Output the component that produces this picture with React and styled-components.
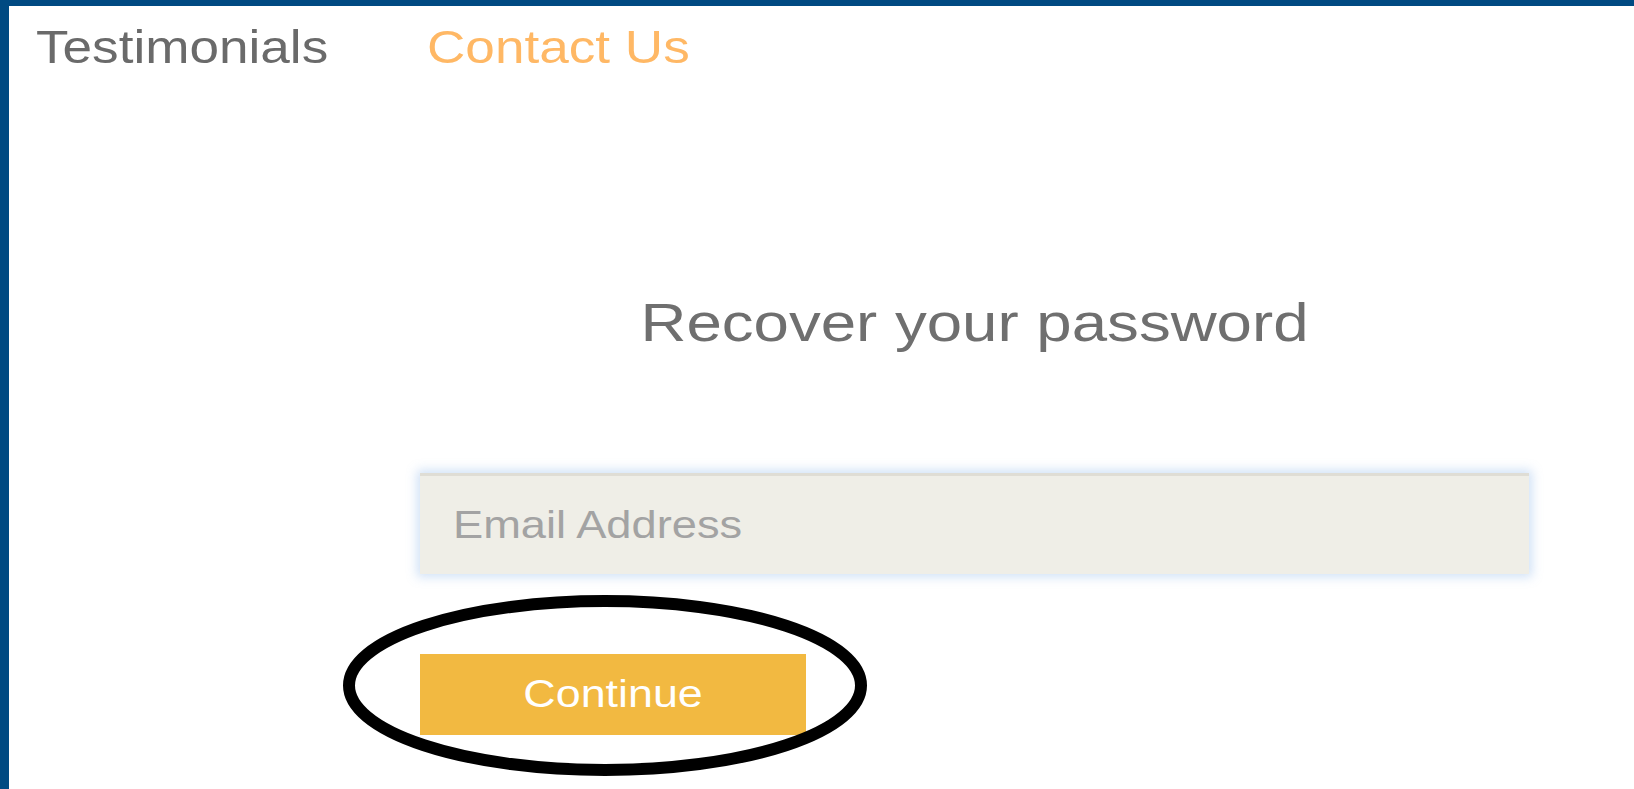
import React from "react";
import styled, { createGlobalStyle } from "styled-components";

const GlobalStyle = createGlobalStyle`
    html, body {
        margin: 0;
        padding: 0;
        background: #ffffff;
    }
    * {
        box-sizing: border-box;
    }
`;

const Page = styled.div`
    min-height: 100vh;
    border-top: 6px solid #004a82;
    border-left: 9px solid #004a82;
    font-family: "Liberation Sans", Arial, sans-serif;
    overflow: hidden;
`;

const Nav = styled.nav`
    display: flex;
    align-items: flex-start;
    gap: 132px;
    height: 80px;
    padding: 17px 0 0 27px;
`;

const NavLink = styled.a`
    display: inline-block;
    font-size: 47px;
    line-height: 1;
    color: ${(props) => (props.$active ? "#ffb865" : "#6a6a6a")};
    text-decoration: none;
    transform: scaleX(1.13);
    transform-origin: left center;
    white-space: nowrap;
`;

const Form = styled.form`
    display: flex;
    flex-direction: column;
    align-items: flex-start;
    width: 1109px;
    margin-left: 411px;
`;

const Title = styled.h1`
    align-self: stretch;
    margin: 210px 0 0;
    font-size: 53px;
    font-weight: normal;
    line-height: 1;
    color: #6f6f6f;
    text-align: center;
    transform: scaleX(1.2);
    transform-origin: center;
`;

const Field = styled.div`
    width: 1109px;
    height: 101px;
    margin-top: 124px;
    display: flex;
    align-items: center;
    padding-left: 33px;
    background: #efeee7;
    border-top: 3px solid #dfddd5;
    box-shadow: 0 0 10px 3px rgba(120, 170, 230, 0.35);
`;

const Placeholder = styled.span`
    display: inline-block;
    font-size: 39px;
    color: #a3a3a3;
    transform: scaleX(1.16);
    transform-origin: left center;
`;

const ButtonWrap = styled.div`
    position: relative;
    margin-top: 80px;
`;

const Button = styled.button`
    display: flex;
    align-items: center;
    justify-content: center;
    width: 386px;
    height: 81px;
    border: none;
    background: #f2b941;
    cursor: pointer;
    padding: 0;
`;

const ButtonLabel = styled.span`
    display: inline-block;
    font-family: "Liberation Sans", Arial, sans-serif;
    font-size: 38px;
    color: #ffffff;
    transform: scaleX(1.18);
`;

const Circle = styled.svg`
    position: absolute;
    left: -82px;
    top: -64px;
    width: 540px;
    height: 190px;
    pointer-events: none;
    overflow: visible;
`;

export default function App() {
    return (
        <>
            <GlobalStyle />
            <Page>
                <Nav>
                    <NavLink href="#">Testimonials</NavLink>
                    <NavLink href="#" $active>Contact Us</NavLink>
                </Nav>

                <Form onSubmit={(e) => e.preventDefault()}>
                    <Title>Recover your password</Title>

                    <Field>
                        <Placeholder>Email Address</Placeholder>
                    </Field>

                    <ButtonWrap>
                        <Button type="submit">
                            <ButtonLabel>Continue</ButtonLabel>
                        </Button>

                        {/* marker ring around the button */}
                        <Circle viewBox="0 0 540 190">
                            <ellipse
                                cx="267"
                                cy="95.5"
                                rx="256"
                                ry="84.5"
                                fill="none"
                                stroke="#000"
                                strokeWidth="12"
                            />
                        </Circle>
                    </ButtonWrap>
                </Form>
            </Page>
        </>
    );
}
